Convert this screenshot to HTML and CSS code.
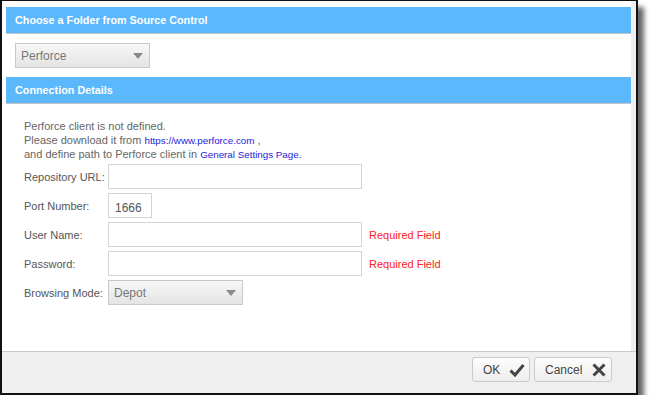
FILE: index.html
```html
<!DOCTYPE html>
<html lang="en">

<head>
  <meta charset="UTF-8">
  <meta name="viewport" content="width=device-width, initial-scale=1.0">
  <title>Choose a Folder from Source Control</title>
  <link rel="stylesheet" href="styles.css">
</head>

<body>

  <div class="dialog">
    <div class="dialog-body">
      <div class="section-title">Choose a Folder from Source Control</div>

      <div class="source-row">
        <div class="dropdown dropdown-source">
          <span>Perforce</span>
          <svg class="caret" width="10" height="6" viewBox="0 0 10 6"><path d="M0 0 L10 0 L5 6 Z" /></svg>
        </div>
      </div>

      <div class="section-title">Connection Details</div>

      <div class="details">
        <p class="notice">
          Perforce client is not defined.<br>
          Please download it from <a href="#">https://www.perforce.com</a> ,<br>
          and define path to Perforce client in <a href="#">General Settings Page.</a>
        </p>

        <div class="form">
          <label for="repoUrl">Repository URL:</label>
          <input type="text" id="repoUrl" class="field field-wide">
          <span></span>

          <label for="portNumber">Port Number:</label>
          <input type="text" id="portNumber" class="field field-port" value="1666">
          <span></span>

          <label for="userName">User Name:</label>
          <input type="text" id="userName" class="field field-wide">
          <span class="required">Required Field</span>

          <label for="password">Password:</label>
          <input type="password" id="password" class="field field-wide">
          <span class="required">Required Field</span>

          <label>Browsing Mode:</label>
          <div class="dropdown dropdown-mode">
            <span>Depot</span>
            <svg class="caret" width="10" height="6" viewBox="0 0 10 6"><path d="M0 0 L10 0 L5 6 Z" /></svg>
          </div>
          <span></span>
        </div>
      </div>
    </div>

    <div class="dialog-footer">
      <button class="btn btn-ok">
        OK
        <svg width="16" height="14" viewBox="0 0 16 14"><path d="M1.5 7.5 L6 12 L14.5 2" /></svg>
      </button>
      <button class="btn btn-cancel">
        Cancel
        <svg width="16" height="14" viewBox="0 0 16 14"><path d="M2.5 1.5 L13.5 12.5 M13.5 1.5 L2.5 12.5" /></svg>
      </button>
    </div>
  </div>

</body>

</html>
```

FILE: styles.css
```css
body {
  margin: 0;
  background-color: #fff;
  font-family: 'Liberation Sans', Arial, sans-serif;
}

.dialog {
  width: 638px;
  height: 395px;
  box-sizing: border-box;
  border: 2px solid #111;
  border-top-width: 1px;
  background-color: #fff;
  display: flex;
  flex-direction: column;
  box-shadow: 6px 7px 5px rgba(0, 0, 0, 0.6);
}

.dialog-body {
  flex: 1;
  padding: 6px 0 0 4px;
  border-right: 5px solid #f0f0f0;
}

.section-title {
  height: 26px;
  line-height: 26px;
  padding-left: 9px;
  background-color: #5cb8fd;
  border-bottom: 1px solid #c4c4c4;
  color: #fff;
  font-size: 10.8px;
  font-weight: bold;
}

.source-row {
  padding: 9px 0 9px 9px;
}

.dropdown {
  height: 25px;
  box-sizing: border-box;
  border: 1px solid #c9c9c9;
  background: linear-gradient(#f7f7f7, #e4e4e4);
  display: flex;
  align-items: center;
  justify-content: space-between;
  padding: 0 6px 0 5px;
  color: #777;
  font-size: 12px;
}

.dropdown-source {
  width: 135px;
}

.dropdown-mode {
  width: 135px;
}

.caret {
  fill: #8a8a8a;
}

.details {
  padding: 15px 0 0 18px;
}

.notice {
  height: 42px;
  margin: 0 0 3px;
  font-size: 11px;
  line-height: 14px;
  color: #666;
}

.notice a {
  color: #2424d8;
  text-decoration: none;
  font-size: 9.8px;
  line-height: 1;
}

.form {
  display: grid;
  grid-template-columns: 84px max-content max-content;
  grid-auto-rows: 25px;
  row-gap: 4px;
  align-items: center;
}

.form label {
  font-size: 11px;
  color: #555;
}

.field {
  height: 25px;
  box-sizing: border-box;
  border: 1px solid #d4d4d4;
  padding: 0 6px;
  font-family: 'Liberation Sans', Arial, sans-serif;
  font-size: 12px;
  color: #555;
  outline: none;
}

.field-wide {
  width: 254px;
}

.field-port {
  width: 44px;
  padding: 4px 0 0 6px;
}

.required {
  margin-left: 7px;
  font-size: 11px;
  color: #ff2020;
}

.dialog-footer {
  height: 42px;
  box-sizing: border-box;
  border-top: 1px solid #c8c8c8;
  background-color: #efefef;
  display: flex;
  justify-content: flex-end;
  gap: 4px;
  padding: 5px 24px 0 0;
}

.btn {
  height: 25px;
  display: flex;
  align-items: center;
  justify-content: space-between;
  padding: 0 4px 0 10px;
  border: 1px solid #cacaca;
  border-radius: 3px;
  background: linear-gradient(#fdfdfd, #eeeeee);
  font-family: 'Liberation Sans', Arial, sans-serif;
  font-size: 12px;
  color: #444;
  cursor: pointer;
}

.btn-ok {
  width: 58px;
}

.btn-cancel {
  width: 78px;
}

.btn svg path {
  fill: none;
  stroke: #444;
  stroke-width: 3;
}
```
